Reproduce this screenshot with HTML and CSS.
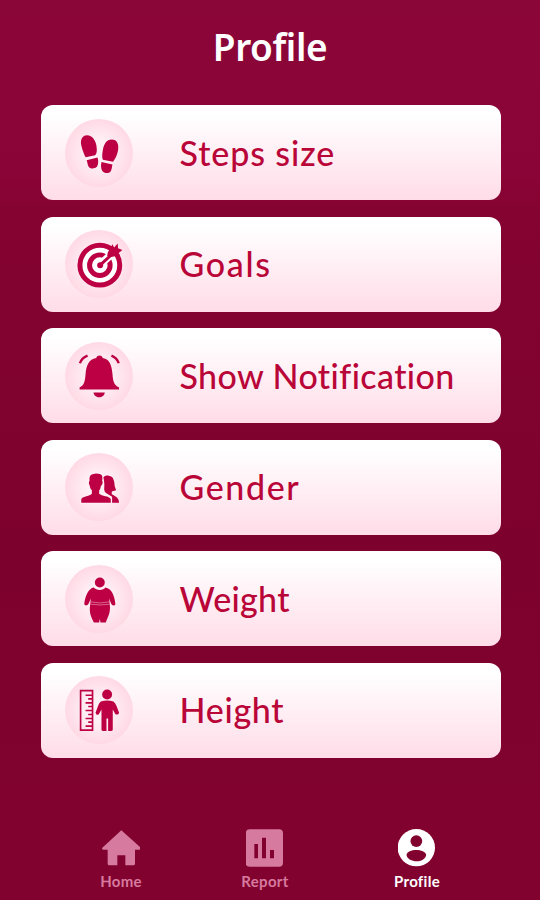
FILE: index.html
```html
<!DOCTYPE html>
<html lang="en">
<head>
  <meta charset="UTF-8">
  <meta name="viewport" content="width=device-width, initial-scale=1.0">
  <title>Profile</title>
  <link rel="stylesheet" href="styles.css">
</head>
<body>
  <div class="app">
    <h1 class="title">Profile</h1>

    <div class="menu">
      <div class="card">
        <svg class="icon" viewBox="43 25 205 205">
          <path d="M92 104C88 84 98 74 109 74C126 74 136 91 138 107C140 120 139 130 134 134L105 140C101 132 95 119 92 104Z"/>
          <path d="M108 149L141 141C145 154 143 165 138 170C130 177 118 175 114 168C111 163 111 155 108 149Z"/>
          <path d="M157 119C160 101 168 87 184 87C200 87 206 102 203 119C200 134 195 144 188 154L157 148C154 138 155 130 157 119Z"/>
          <path d="M153 155L186 162C184 170 184 178 180 184C175 190 160 189 155 181C151 174 151 164 153 155Z"/>
        </svg>
        <span class="label steps">Steps size</span>
      </div>

      <div class="card">
        <svg class="icon" viewBox="43 28 205 205">
          <circle class="white" cx="148" cy="134" r="62"/>
          <circle class="ring" cx="148" cy="134" r="60"/>
          <circle class="ring" cx="148" cy="134" r="31"/>
          <path class="arrow-gap" d="M150 132L194 90"/>
          <circle cx="149" cy="134" r="9"/>
          <path class="shaft" d="M149 134L188 98"/>
          <path d="M172 96L186 71L191 81L202 69L203 83L216 88L203 99L209 103L190 108L178 110L170 106Z"/>
        </svg>
        <span class="label goals">Goals</span>
      </div>

      <div class="card">
        <svg class="icon" viewBox="43 28 205 205">
          <path d="M87 171V165C101 158 103 147 105 125C107 97 115 80 137 76C140 66 154 66 157 76C178 80 184 98 186 124C188 147 190 158 206 165V171Z"/>
          <path d="M129 180H163C161 199 131 199 129 180Z"/>
          <path class="wave" d="M88 92Q93 76 111 69M183 69Q200 76 205 92"/>
        </svg>
        <span class="label notification">Show Notification</span>
      </div>

      <div class="card">
        <svg class="icon" viewBox="43 28 205 205">
          <path d="M158 102C164 96 170 95 176 97C190 98 192 113 193 128L197 140L184 144V152C192 157 206 160 206 178H185V160L169 150Q161 145 161 138Q163 115 158 102Z"/>
          <path class="outlined" d="M92 178V167C97 158 118 158 124 151V140C118 136 119 129 117 125C113 119 116 115 117 112C116 99 119 94 126 92C137 87 149 90 154 95C157 100 155 108 155 112C159 118 154 126 151 128C150 137 146 140 146 142V151C154 159 176 157 181 167V178Z"/>
        </svg>
        <span class="label gender">Gender</span>
      </div>

      <div class="card">
        <svg class="icon" viewBox="43 26 205 205">
          <circle cx="148" cy="79" r="15"/>
          <path d="M130 94C137 104 159 104 165 94C183 97 192 117 195 144C192 151 184 148 182 142L176 127L178 145C181 169 173 182 166 199H150L148 188L146 199H130C121 182 115 168 119 145L121 127L114 143C110 150 102 149 101 143C105 116 114 97 130 94Z"/>
          <path class="belt" d="M119 137Q148 144 178 137M120 144Q148 149 178 144"/>
        </svg>
        <span class="label weight">Weight</span>
      </div>

      <div class="card">
        <svg class="icon" viewBox="43 26 205 205">
          <path class="ruler" d="M90 70H126V189H90ZM105 84H126M113 95H126M105 107H126M113 118H126M105 130H126M113 142H126M105 154H126M113 165H126M105 177H126"/>
          <circle cx="170" cy="82" r="15"/>
          <path d="M151 103Q170 96 189 103Q195 107 199 118L206 137Q205 145 195 141L187 127V187Q187 192 182 192H173V154H168V192H158Q153 192 153 187V127L145 141Q137 146 135 137L142 118Q145 107 151 103Z"/>
        </svg>
        <span class="label height">Height</span>
      </div>
    </div>

    <div class="navbar">
      <div class="nav-item">
        <svg class="nav-icon" viewBox="68 42 114 114">
          <path d="M126 46L184 98Q186 103 180 104H167V146Q167 151 162 151H138V121H114V151H90Q85 151 85 146V104H72Q66 102 69 98Z"/>
        </svg>
        <span>Home</span>
      </div>
      <div class="nav-item report">
        <svg class="nav-icon" viewBox="498 42 114 114">
          <rect x="497" y="43" width="112" height="112" rx="12"/>
          <path class="bars" d="M523 87h11v43h-11zM546 68h12v62h-12zM570 105h12v25h-12z"/>
        </svg>
        <span>Report</span>
      </div>
      <div class="nav-item active">
        <svg class="nav-icon" viewBox="112 42 116 116">
          <circle cx="168" cy="99" r="57"/>
          <circle class="bars" cx="168" cy="79" r="18"/>
          <path class="bars" d="M138 121C140 101 195 101 198 121C194 147 142 146 138 121Z"/>
        </svg>
        <span>Profile</span>
      </div>
    </div>
  </div>
</body>
</html>
```
FILE: styles.css
```css
body {
  margin: 0;
  background-color: #82022f;
  font-family: Lato, "Open Sans", sans-serif;
}

.app {
  box-sizing: border-box;
  width: 540px;
  height: 900px;
  overflow: hidden;
  display: flex;
  flex-direction: column;
  background: linear-gradient(#8b0638 0, #8b0437 170px, #840330 215px, #7d012d 560px, #82022f 900px);
}

.title {
  margin: 0;
  height: 105px;
  box-sizing: border-box;
  padding-top: 22px;
  text-align: center;
  font-family: "Noto Sans", sans-serif;
  font-size: 37px;
  line-height: 50px;
  font-weight: 600;
  letter-spacing: -0.4px;
  color: #fff;
}

.menu {
  display: flex;
  flex-direction: column;
  gap: 16.6px;
  margin: 0 39px 0 41px;
}

.card {
  box-sizing: border-box;
  height: 95px;
  padding-left: 23.5px;
  display: flex;
  align-items: center;
  border-radius: 12px;
  background: linear-gradient(#fff 10%, #ffdce8);
}

.icon {
  width: 68px;
  height: 68px;
  margin-right: 47px;
  border-radius: 50%;
  background: radial-gradient(circle closest-side, #fff0f5 35%, #ffd9e5 100%);
  fill: #bd0043;
}

.icon .white {
  fill: #fff;
}

.icon .ring {
  fill: none;
  stroke: #bd0043;
  stroke-width: 15;
}

.icon .arrow-gap {
  stroke: #fff;
  stroke-width: 23;
}

.icon .shaft {
  stroke: #bd0043;
  stroke-width: 9;
}

.icon .wave {
  fill: none;
  stroke: #bd0043;
  stroke-width: 7;
}

.icon .outlined {
  stroke: #fff0f5;
  stroke-width: 6;
  paint-order: stroke;
}

.icon .belt {
  fill: none;
  stroke: #e894b1;
  stroke-width: 2;
}

.icon .ruler {
  fill: none;
  stroke: #bd0043;
  stroke-width: 5;
}

.label {
  font-size: 34px;
  line-height: 44px;
  font-weight: 500;
  font-variant-ligatures: none;
  color: #b90538;
  white-space: nowrap;
}

.steps {
  letter-spacing: 0.9px;
}

.goals {
  letter-spacing: 1.7px;
}

.notification {
  letter-spacing: 0.4px;
}

.gender {
  letter-spacing: 1.6px;
}

.weight {
  letter-spacing: 0.3px;
}

.height {
  letter-spacing: 0.7px;
}

.navbar {
  display: flex;
  margin: 71px 0 0 82px;
  font-size: 15px;
  line-height: 18px;
  font-weight: 700;
  letter-spacing: 0.3px;
}

.nav-item {
  width: 78px;
  margin-right: 66px;
  display: flex;
  flex-direction: column;
  align-items: center;
  gap: 5px;
  color: #d77a9f;
  fill: #d77a9f;
}

.nav-item.report {
  margin-right: 74px;
}

.nav-item.active {
  margin-right: 0;
  color: #fff;
  fill: #fff;
}

.nav-icon {
  width: 38px;
  height: 38px;
}

.nav-icon .bars {
  fill: #82022f;
}
```
